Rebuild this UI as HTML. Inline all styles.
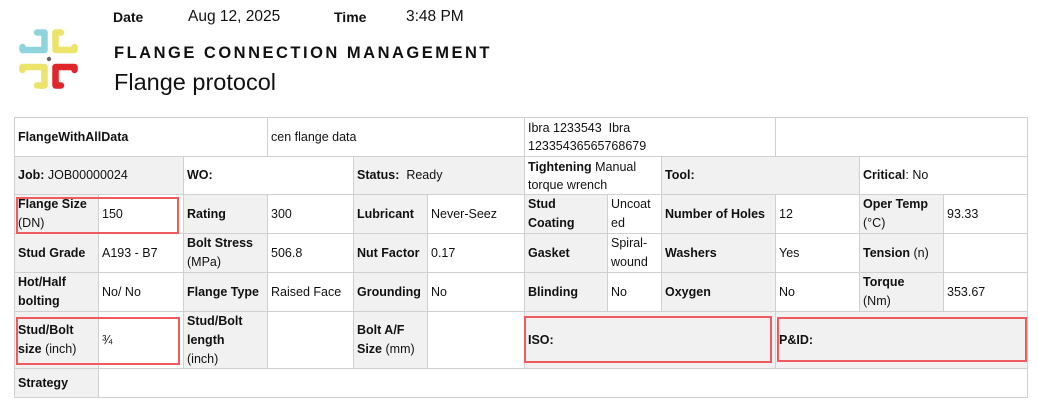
<!DOCTYPE html>
<html><head><meta charset="utf-8"><style>
body{margin:0;width:1038px;height:406px;background:#fff;font-family:"Liberation Sans",sans-serif;color:#111;position:relative;overflow:hidden}
.a{position:absolute;white-space:nowrap}
.c{position:absolute;box-sizing:border-box;border:1px solid #d0d0d0;font-size:12.5px;line-height:17px;padding:0 3px;display:flex;align-items:center;overflow:hidden}
.g{background:#f1f1f1}
b{font-weight:bold}
.r{position:absolute;border:2px solid #ee5a5e;box-sizing:border-box}
</style></head><body>
<div class="a" style="left:113px;top:9px;font-size:14px;font-weight:bold">Date</div>
<div class="a" style="left:188px;top:8px;font-size:15.5px">Aug 12, 2025</div>
<div class="a" style="left:334px;top:9px;font-size:14px;font-weight:bold">Time</div>
<div class="a" style="left:406px;top:8px;font-size:15.5px">3:48 PM</div>
<div class="a" style="left:114px;top:44px;font-size:16.5px;font-weight:bold;letter-spacing:2.5px">FLANGE CONNECTION MANAGEMENT</div>
<div class="a" style="left:114px;top:69px;font-size:23.5px">Flange protocol</div>
<svg class="a" style="left:0;top:0" width="100" height="100" viewBox="0 0 100 100" fill="none" stroke-width="6.5" stroke-linecap="round" stroke-linejoin="round">
<path d="M37 32.5H44.5V50H22.5V47" stroke="#8fd3dd"/>
<path d="M61 32.5H55.5V50H74.5V47" stroke="#ece46a"/>
<path d="M22.5 70V67H44.5V85.5H37" stroke="#ece46a"/>
<path d="M74.5 70V67H55.5V85.5H61" stroke="#e0262a"/>
<circle cx="49" cy="59" r="2.2" fill="#666" stroke="none"/>
</svg>

<div class="c" style="left:14px;top:117px;width:254px;height:40px"><b>FlangeWithAllData</b></div>
<div class="c" style="left:267px;top:117px;width:258px;height:40px">cen flange data</div>
<div class="c" style="left:524px;top:117px;width:252px;height:40px;line-height:18px">Ibra 1233543&nbsp; Ibra<br>12335436565768679</div>
<div class="c" style="left:775px;top:117px;width:253px;height:40px"></div>

<div class="c g" style="left:14px;top:156px;width:170px;height:39px"><span><b>Job:</b> JOB00000024</span></div>
<div class="c" style="left:183px;top:156px;width:171px;height:39px"><b>WO:</b></div>
<div class="c g" style="left:353px;top:156px;width:172px;height:39px"><span><b>Status:</b>&nbsp; Ready</span></div>
<div class="c" style="left:524px;top:156px;width:138px;height:39px;line-height:18px"><span><b>Tightening</b> Manual<br>torque wrench</span></div>
<div class="c g" style="left:661px;top:156px;width:199px;height:39px"><b>Tool:</b></div>
<div class="c" style="left:859px;top:156px;width:169px;height:39px"><span><b>Critical</b>: No</span></div>

<div class="c g" style="left:14px;top:194px;width:85px;height:40px;line-height:19px"><span><b>Flange Size</b><br>(DN)</span></div>
<div class="c" style="left:98px;top:194px;width:86px;height:40px">150</div>
<div class="c g" style="left:183px;top:194px;width:85px;height:40px"><b>Rating</b></div>
<div class="c" style="left:267px;top:194px;width:87px;height:40px">300</div>
<div class="c g" style="left:353px;top:194px;width:75px;height:40px"><b>Lubricant</b></div>
<div class="c" style="left:427px;top:194px;width:98px;height:40px">Never-Seez</div>
<div class="c g" style="left:524px;top:194px;width:84px;height:40px;line-height:19px"><span><b>Stud<br>Coating</b></span></div>
<div class="c" style="left:607px;top:194px;width:55px;height:40px;line-height:19px"><span>Uncoat<br>ed</span></div>
<div class="c g" style="left:661px;top:194px;width:115px;height:40px"><b>Number of Holes</b></div>
<div class="c" style="left:775px;top:194px;width:85px;height:40px">12</div>
<div class="c g" style="left:859px;top:194px;width:85px;height:40px;line-height:19px"><span><b>Oper Temp</b><br>(°C)</span></div>
<div class="c" style="left:943px;top:194px;width:85px;height:40px">93.33</div>

<div class="c g" style="left:14px;top:233px;width:85px;height:40px"><b>Stud Grade</b></div>
<div class="c" style="left:98px;top:233px;width:86px;height:40px">A193 - B7</div>
<div class="c g" style="left:183px;top:233px;width:85px;height:40px;line-height:19px"><span><b>Bolt Stress</b><br>(MPa)</span></div>
<div class="c" style="left:267px;top:233px;width:87px;height:40px">506.8</div>
<div class="c g" style="left:353px;top:233px;width:75px;height:40px"><b>Nut Factor</b></div>
<div class="c" style="left:427px;top:233px;width:98px;height:40px">0.17</div>
<div class="c g" style="left:524px;top:233px;width:84px;height:40px"><b>Gasket</b></div>
<div class="c" style="left:607px;top:233px;width:55px;height:40px;line-height:19px"><span>Spiral-<br>wound</span></div>
<div class="c g" style="left:661px;top:233px;width:115px;height:40px"><b>Washers</b></div>
<div class="c" style="left:775px;top:233px;width:85px;height:40px">Yes</div>
<div class="c g" style="left:859px;top:233px;width:85px;height:40px"><span><b>Tension</b> (n)</span></div>
<div class="c" style="left:943px;top:233px;width:85px;height:40px"></div>

<div class="c g" style="left:14px;top:272px;width:85px;height:40px;line-height:19px"><span><b>Hot/Half<br>bolting</b></span></div>
<div class="c" style="left:98px;top:272px;width:86px;height:40px">No/ No</div>
<div class="c g" style="left:183px;top:272px;width:85px;height:40px"><b>Flange Type</b></div>
<div class="c" style="left:267px;top:272px;width:87px;height:40px">Raised Face</div>
<div class="c g" style="left:353px;top:272px;width:75px;height:40px"><b>Grounding</b></div>
<div class="c" style="left:427px;top:272px;width:98px;height:40px">No</div>
<div class="c g" style="left:524px;top:272px;width:84px;height:40px"><b>Blinding</b></div>
<div class="c" style="left:607px;top:272px;width:55px;height:40px">No</div>
<div class="c g" style="left:661px;top:272px;width:115px;height:40px"><b>Oxygen</b></div>
<div class="c" style="left:775px;top:272px;width:85px;height:40px">No</div>
<div class="c g" style="left:859px;top:272px;width:85px;height:40px;line-height:19px"><span><b>Torque</b><br>(Nm)</span></div>
<div class="c" style="left:943px;top:272px;width:85px;height:40px">353.67</div>

<div class="c g" style="left:14px;top:311px;width:85px;height:58px;line-height:19px"><span><b>Stud/Bolt<br>size</b> (inch)</span></div>
<div class="c" style="left:98px;top:311px;width:86px;height:58px">¾</div>
<div class="c g" style="left:183px;top:311px;width:85px;height:58px;line-height:19px"><span><b>Stud/Bolt<br>length</b><br>(inch)</span></div>
<div class="c" style="left:267px;top:311px;width:87px;height:58px"></div>
<div class="c g" style="left:353px;top:311px;width:75px;height:58px;line-height:19px"><span><b>Bolt A/F<br>Size</b> (mm)</span></div>
<div class="c" style="left:427px;top:311px;width:98px;height:58px"></div>
<div class="c g" style="left:524px;top:311px;width:252px;height:58px"><b>ISO:</b></div>
<div class="c g" style="left:775px;top:311px;width:253px;height:58px"><b>P&amp;ID:</b></div>

<div class="c g" style="left:14px;top:368px;width:85px;height:30px"><b>Strategy</b></div>
<div class="c" style="left:98px;top:368px;width:930px;height:30px"></div>

<div class="r" style="left:16px;top:197px;width:163px;height:37px"></div>
<div class="r" style="left:16px;top:317px;width:164px;height:48px"></div>
<div class="r" style="left:524px;top:316px;width:248px;height:47px"></div>
<div class="r" style="left:777px;top:317px;width:250px;height:45px"></div>
</body></html>
